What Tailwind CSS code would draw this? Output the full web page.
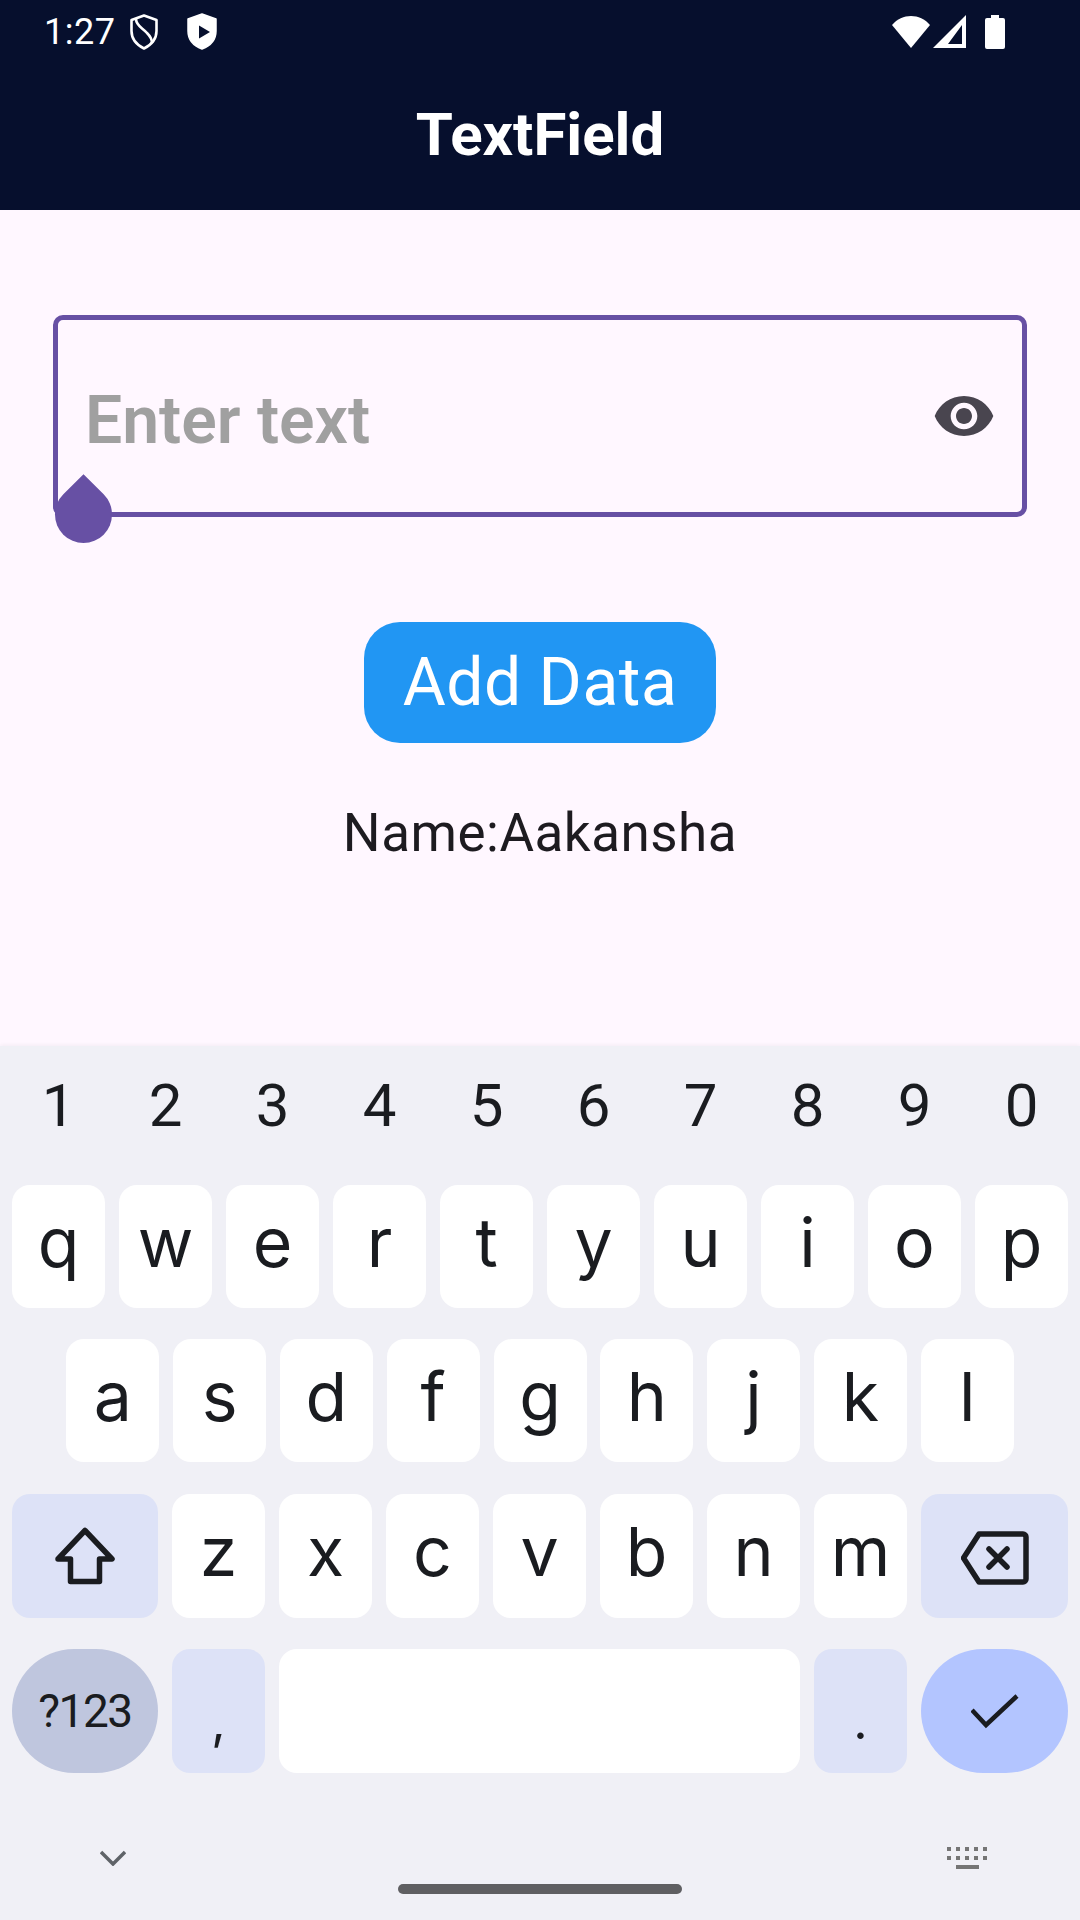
<!doctype html>
<html>
<head>
<meta charset="utf-8">
<script src="https://cdn.jsdelivr.net/npm/@tailwindcss/browser@4"></script>
</head>
<body class="m-0">
<div class="w-[1080px] h-[1920px] flex flex-col bg-[#fff7ff] font-['Roboto',sans-serif] overflow-hidden">
  <header class="h-[210px] bg-[#060f2d] text-white flex flex-col">
    <div class="h-[63px] flex items-center pl-[44px] pr-[75px]">
      <span class="w-[86px] text-[36px] leading-none tracking-[0.5px]">1:27</span>
      <svg class="w-[28px] h-[36px] mr-[29px]" viewBox="0 0 28 36" fill="none" stroke="white" stroke-width="2.6" stroke-linejoin="round"><path d="M14 1.5 L26.5 6 V17 C26.5 25 21 31 14 34.5 C7 31 1.5 25 1.5 17 V6 Z"/><path d="M6 5 C6 12 13 14 17 19 C20 22 22 25 22 29"/></svg>
      <svg class="w-[30px] h-[37px]" viewBox="0 0 30 37"><path fill="white" stroke="white" stroke-width="1.5" stroke-linejoin="round" d="M15 1 L29 6 V18 C29 27 23 33 15 36 C7 33 1 27 1 18 V6 Z"/><path fill="#060f2d" d="M12 12.5 L23 19 L12 25.5 Z"/></svg>
      <div class="flex-1"></div>
      <svg class="w-[38px] h-[32px] mr-[3px]" viewBox="0 0 38 32"><path fill="white" d="M19 32 L0 9 C5 3 12 0 19 0 C26 0 33 3 38 9 Z"/></svg>
      <svg class="w-[33px] h-[33px] mr-[19px]" viewBox="0 0 33 33"><path fill="white" fill-rule="evenodd" d="M33 0 V33 H0 Z M29 10 L15 29 H29 Z"/></svg>
      <svg class="w-[20px] h-[34px]" viewBox="0 0 20 34"><path fill="white" d="M6 0 H14 V3 H18 A2 2 0 0 1 20 5 V32 A2 2 0 0 1 18 34 H2 A2 2 0 0 1 0 32 V5 A2 2 0 0 1 2 3 H6 Z"/></svg>
    </div>
    <div class="flex-1 flex items-center justify-center pb-[4px]">
      <h1 class="text-[60px] leading-none font-bold">TextField</h1>
    </div>
  </header>

  <main class="flex-1 flex flex-col items-center pt-[105px] px-[53px]">
    <div class="relative w-full h-[202px] border-[5px] border-[#6750a4] rounded-[10px] flex items-center pl-[27px] pr-[26px]">
      <span class="text-[66px] leading-none font-semibold text-[#a0a0a0] mt-[9px]">Enter text</span>
      <div class="flex-1"></div>
      <svg class="w-[64px] h-[64px]" viewBox="0 0 24 24"><path fill="#49454f" d="M12 4.5C7 4.5 2.73 7.61 1 12c1.73 4.39 6 7.5 11 7.5s9.27-3.11 11-7.5c-1.73-4.39-6-7.5-11-7.5zM12 17c-2.76 0-5-2.24-5-5s2.24-5 5-5 5 2.24 5 5-2.24 5-5 5zm0-8c-1.66 0-3 1.34-3 3s1.34 3 3 3 3-1.34 3-3-1.34-3-3-3z"/></svg>
      <div class="absolute left-[-3px] top-[166px] w-[57px] h-[57px] bg-[#6750a4] rounded-full rounded-tl-none rotate-45"></div>
    </div>
    <button class="mt-[105px] w-[352px] h-[121px] bg-[#2196f3] text-white rounded-[36px] text-[66px] leading-none tracking-[0.5px] flex items-center justify-center">Add Data</button>
    <p class="mt-[52px] text-[53px] leading-[76px] tracking-[0.5px] text-[#1d1b20]">Name:Aakansha</p>
  </main>

  <section class="h-[874px] bg-[#f0f0f6] shadow-[0_-1px_4px_rgba(0,0,0,0.05)] px-[12px] text-[#1a1c20] relative flex flex-col">
    <div class="h-[139px] pb-[19px] grid grid-cols-10 gap-[14px] items-center text-[60px] text-center leading-none">
      <span>1</span><span>2</span><span>3</span><span>4</span><span>5</span><span>6</span><span>7</span><span>8</span><span>9</span><span>0</span>
    </div>
    <div class="flex flex-col gap-[31.3px] font-['Inter',sans-serif] font-normal text-[68px] leading-none">
      <div class="grid grid-cols-10 gap-[14px] h-[123px] text-center">
        <div class="bg-white rounded-[18px] flex items-center justify-center pb-[10px]">q</div>
        <div class="bg-white rounded-[18px] flex items-center justify-center pb-[10px]">w</div>
        <div class="bg-white rounded-[18px] flex items-center justify-center pb-[10px]">e</div>
        <div class="bg-white rounded-[18px] flex items-center justify-center pb-[10px]">r</div>
        <div class="bg-white rounded-[18px] flex items-center justify-center pb-[10px]">t</div>
        <div class="bg-white rounded-[18px] flex items-center justify-center pb-[10px]">y</div>
        <div class="bg-white rounded-[18px] flex items-center justify-center pb-[10px]">u</div>
        <div class="bg-white rounded-[18px] flex items-center justify-center pb-[10px]">i</div>
        <div class="bg-white rounded-[18px] flex items-center justify-center pb-[10px]">o</div>
        <div class="bg-white rounded-[18px] flex items-center justify-center pb-[10px]">p</div>
      </div>
      <div class="flex justify-center gap-[13.8px] h-[123px]">
        <div class="w-[93px] bg-white rounded-[18px] flex items-center justify-center pb-[10px]">a</div>
        <div class="w-[93px] bg-white rounded-[18px] flex items-center justify-center pb-[10px]">s</div>
        <div class="w-[93px] bg-white rounded-[18px] flex items-center justify-center pb-[10px]">d</div>
        <div class="w-[93px] bg-white rounded-[18px] flex items-center justify-center pb-[10px]">f</div>
        <div class="w-[93px] bg-white rounded-[18px] flex items-center justify-center pb-[10px]">g</div>
        <div class="w-[93px] bg-white rounded-[18px] flex items-center justify-center pb-[10px]">h</div>
        <div class="w-[93px] bg-white rounded-[18px] flex items-center justify-center pb-[10px]">j</div>
        <div class="w-[93px] bg-white rounded-[18px] flex items-center justify-center pb-[10px]">k</div>
        <div class="w-[93px] bg-white rounded-[18px] flex items-center justify-center pb-[10px]">l</div>
      </div>
      <div class="flex gap-[14px] h-[124px]">
        <div class="w-[146px] bg-[#dde2f7] rounded-[18px] flex items-center justify-center">
          <svg class="w-[60px] h-[58px]" viewBox="0 0 60 58" fill="none" stroke="#1a1c20" stroke-width="5.5" stroke-linejoin="round"><path d="M30 3.5 L57 32 H44.5 V54.5 H15.5 V32 H3 Z"/></svg>
        </div>
        <div class="w-[93px] bg-white rounded-[18px] flex items-center justify-center pb-[10px]">z</div>
        <div class="w-[93px] bg-white rounded-[18px] flex items-center justify-center pb-[10px]">x</div>
        <div class="w-[93px] bg-white rounded-[18px] flex items-center justify-center pb-[10px]">c</div>
        <div class="w-[93px] bg-white rounded-[18px] flex items-center justify-center pb-[10px]">v</div>
        <div class="w-[93px] bg-white rounded-[18px] flex items-center justify-center pb-[10px]">b</div>
        <div class="w-[93px] bg-white rounded-[18px] flex items-center justify-center pb-[10px]">n</div>
        <div class="w-[93px] bg-white rounded-[18px] flex items-center justify-center pb-[10px]">m</div>
        <div class="flex-1 bg-[#dde2f7] rounded-[18px] flex items-center justify-center">
          <svg class="w-[68px] h-[54px] mt-[5px]" viewBox="0 0 68 54" fill="none" stroke="#1a1c20" stroke-width="5.5" stroke-linejoin="round" stroke-linecap="round"><path d="M2.5 27 L18 3 H62 A3 3 0 0 1 65 6 V48 A3 3 0 0 1 62 51 H18 Z"/><path d="M28 18 L46 36 M46 18 L28 36" /></svg>
        </div>
      </div>
      <div class="flex gap-[14px] h-[124px]">
        <div class="w-[146px] bg-[#bfc6de] rounded-[62px] flex items-center justify-center font-['Roboto',sans-serif] font-normal text-[46px] tracking-[-1.5px]">?123</div>
        <div class="w-[93px] bg-[#dde2f7] rounded-[18px] flex items-center justify-center font-normal text-[50px] pt-[20px]">,</div>
        <div class="flex-1 bg-white rounded-[18px]"></div>
        <div class="w-[93px] bg-[#dde2f7] rounded-[18px] flex items-center justify-center font-normal text-[50px] pt-[20px]">.</div>
        <div class="w-[147px] bg-[#b3c5ff] rounded-[62px] flex items-center justify-center">
          <svg class="w-[48px] h-[36px]" viewBox="0 0 48 36" fill="none" stroke="#1a1c20" stroke-width="4.5"><path d="M1 17 L15 32 L46 3"/></svg>
        </div>
      </div>
    </div>
    <svg class="absolute left-[100px] top-[804px] w-[26px] h-[16px]" viewBox="0 0 26 16" fill="none" stroke="#5f6368" stroke-width="3.5"><path d="M1 2 L13 14 L25 2"/></svg>
    <svg class="absolute left-[947px] top-[801px] w-[41px] h-[23px]" viewBox="0 0 41 23" fill="#757575"><path d="M0 0h4v4H0zM9 0h4v4H9zM18 0h4v4h-4zM27 0h4v4h-4zM36 0h4v4h-4zM0 9h4v4H0zM9 9h4v4H9zM18 9h4v4h-4zM27 9h4v4h-4zM36 9h4v4h-4zM9 18h23v4H9z"/></svg>
    <div class="absolute left-[398px] top-[838px] w-[284px] h-[10px] rounded-full bg-[#5f5f62]"></div>
  </section>
</div>
</body>
</html>
